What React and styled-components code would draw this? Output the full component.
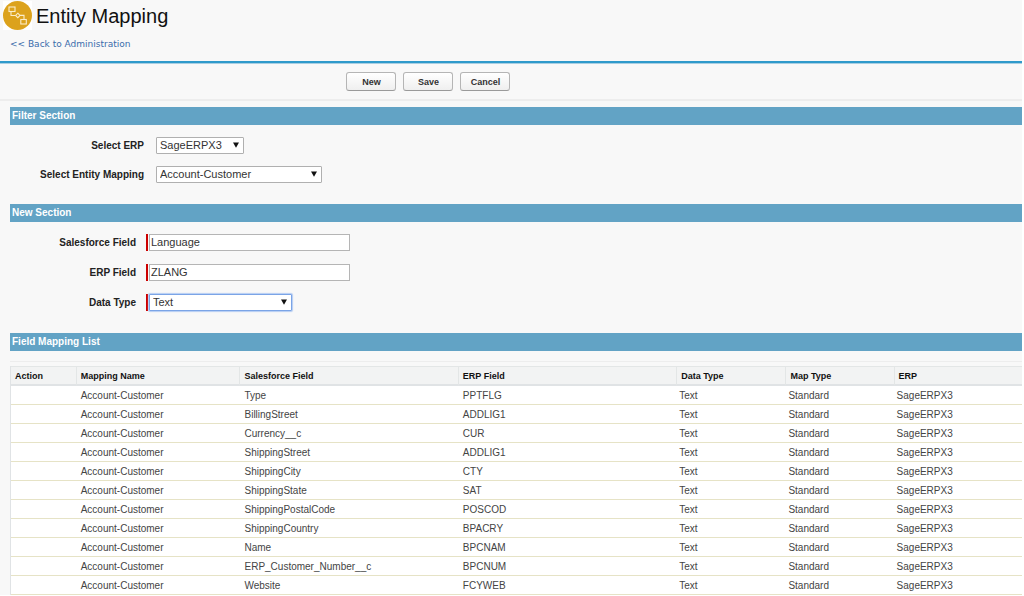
import React, { useState } from 'react'
import styled, { createGlobalStyle } from 'styled-components'

const columns = [
  { title: 'Action', width: '6.4%' },
  { title: 'Mapping Name', width: '16.2%' },
  { title: 'Salesforce Field', width: '21.6%' },
  { title: 'ERP Field', width: '21.6%' },
  { title: 'Data Type', width: '10.8%' },
  { title: 'Map Type', width: '10.7%' },
  { title: 'ERP', width: '12.7%' },
];

const mappings = [
  ['Type', 'PPTFLG'],
  ['BillingStreet', 'ADDLIG1'],
  ['Currency__c', 'CUR'],
  ['ShippingStreet', 'ADDLIG1'],
  ['ShippingCity', 'CTY'],
  ['ShippingState', 'SAT'],
  ['ShippingPostalCode', 'POSCOD'],
  ['ShippingCountry', 'BPACRY'],
  ['Name', 'BPCNAM'],
  ['ERP_Customer_Number__c', 'BPCNUM'],
  ['Website', 'FCYWEB'],
];

const LogoIcon = () => (
  <Logo viewBox="0 0 29 29" aria-hidden="true">
    <circle cx="14.5" cy="14.5" r="14.5" fill="#dca21c" />
    <g fill="none" stroke="#fbedca" strokeWidth="1.1">
      <rect x="6" y="6" width="6" height="4.5" />
      <path d="M8 10.5v4h4.5" />
      <path d="M14.8 12.2l2.2 2.2-2.2 2.2-2.2-2.2z" />
      <path d="M17 14.4h4v4.1" />
      <rect x="17.8" y="18.5" width="5.5" height="4.5" />
    </g>
  </Logo>
);

const SelectBox = ({ id, width, focused, options }) => (
  <SelectWrap $width={width}>
    <Select id={id} $focused={focused}>
      {options.map((option) => (
        <option key={option}>{option}</option>
      ))}
    </Select>
    <Arrow viewBox="0 0 6 6" aria-hidden="true">
      <path d="M0 0.5h6L3 5.8z" fill="#111" />
    </Arrow>
  </SelectWrap>
);

const App = () => {
  const [salesforceField, setSalesforceField] = useState('Language');
  const [erpField, setErpField] = useState('ZLANG');

  return (
    <Page>
      <GlobalStyle />
      <Header>
        <TitleRow>
          <LogoIcon />
          <Title>Entity Mapping</Title>
        </TitleRow>
        <BackLink href="#administration">&lt;&lt; Back to Administration</BackLink>
      </Header>

      <Toolbar>
        <Button type="button">New</Button>
        <Button type="button">Save</Button>
        <Button type="button">Cancel</Button>
      </Toolbar>

      <Content>
        <SectionTitle>Filter Section</SectionTitle>
        <Form $labelWidth="134px" $gap="12px" $bottom="21px">
          <Label htmlFor="erp">Select ERP</Label>
          <SelectBox id="erp" width="88px" options={['SageERPX3']} />
          <Label htmlFor="entity">Select Entity Mapping</Label>
          <SelectBox id="entity" width="166px" options={['Account-Customer']} />
        </Form>

        <SectionTitle>New Section</SectionTitle>
        <Form $labelWidth="126px" $gap="10px" $rowGap="13px" $bottom="22px">
          <Label htmlFor="sfField">Salesforce Field</Label>
          <Required>
            <Input
              id="sfField"
              value={salesforceField}
              onChange={(e) => setSalesforceField(e.target.value)}
            />
          </Required>
          <Label htmlFor="erpField">ERP Field</Label>
          <Required>
            <Input
              id="erpField"
              value={erpField}
              onChange={(e) => setErpField(e.target.value)}
            />
          </Required>
          <Label htmlFor="dataType">Data Type</Label>
          <Required>
            <SelectBox id="dataType" width="143px" focused options={['Text']} />
          </Required>
        </Form>

        <SectionTitle>Field Mapping List</SectionTitle>
        <List>
          <Table>
            <colgroup>
              {columns.map((col) => (
                <Col key={col.title} $width={col.width} />
              ))}
            </colgroup>
            <thead>
              <tr>
                {columns.map((col) => (
                  <Th key={col.title} scope="col">{col.title}</Th>
                ))}
              </tr>
            </thead>
            <tbody>
              {mappings.map(([field, erp]) => (
                <tr key={field}>
                  <Td />
                  <Td>Account-Customer</Td>
                  <Td>{field}</Td>
                  <Td>{erp}</Td>
                  <Td $tight>Text</Td>
                  <Td $tight>Standard</Td>
                  <Td $tight>SageERPX3</Td>
                </tr>
              ))}
            </tbody>
          </Table>
        </List>
      </Content>
    </Page>
  );
}

export default App


const GlobalStyle = createGlobalStyle`
  * {
    box-sizing: border-box;
  }
  body {
    margin: 0;
    background-color: #fff;
    color: #222;
    font-family: "Liberation Sans", Arial, sans-serif;
    font-size: 10px;
  }
`;

const Page = styled.div`
  margin-right: 2px;
  background-color: #f8f8f8;
`;

const Header = styled.header`
  height: 63px;
  border-bottom: 2px solid #2f9acb;
`;

const TitleRow = styled.div`
  display: flex;
  align-items: center;
  gap: 4px;
  height: 31px;
  padding-left: 3px;
`;

const Logo = styled.svg`
  width: 29px;
  height: 29px;
  background-color: #fff;
`;

const Title = styled.h1`
  margin: 0;
  font-size: 20px;
  font-weight: 400;
  line-height: 30px;
  color: #111;
`;

const BackLink = styled.a`
  display: inline-block;
  margin-left: 10px;
  font-family: Verdana, "DejaVu Sans", sans-serif;
  font-size: 9px;
  line-height: 26px;
  color: #3a6cab;
  text-decoration: none;
  &:hover {
    text-decoration: underline;
  }
`;

const Toolbar = styled.div`
  display: flex;
  align-items: center;
  gap: 7px;
  height: 38px;
  padding-left: 33.9%;
  border-top: 1px solid #a9cfe2;
  border-bottom: 2px solid #ededed;
`;

const Button = styled.button`
  width: 50px;
  height: 19px;
  padding: 0;
  border: 1px solid #b5b5b5;
  border-bottom-color: #9a9a9a;
  border-radius: 3px;
  background: linear-gradient(#fff, #efefef);
  color: #333;
  font-family: inherit;
  font-size: 9px;
  font-weight: 700;
  cursor: pointer;
`;

const Content = styled.main`
  padding: 6px 0 0 10px;
`;

const SectionTitle = styled.h2`
  margin: 0;
  padding-left: 2px;
  background-color: #62a3c5;
  color: #fff;
  font-size: 10px;
  font-weight: 700;
  line-height: 18px;
`;

const Form = styled.div`
  display: grid;
  grid-template-columns: ${(props) => props.$labelWidth} 1fr;
  column-gap: ${(props) => props.$gap};
  row-gap: ${(props) => props.$rowGap || '12px'};
  padding: 12px 0 ${(props) => props.$bottom};
`;

const Label = styled.label`
  color: #222;
  font-weight: 700;
  line-height: 17px;
  text-align: right;
  white-space: nowrap;
`;

const Required = styled.div`
  display: flex;
  border-left: 2px solid #c00;
  padding-left: 1px;
`;

const Input = styled.input`
  width: 201px;
  height: 17px;
  padding: 0 1px 1px;
  border: 1px solid #b5b5b5;
  background-color: #fff;
  color: #333;
  font-family: inherit;
  font-size: 11px;
`;

const SelectWrap = styled.div`
  position: relative;
  width: ${(props) => props.$width};
  height: 17px;
`;

const Select = styled.select`
  display: block;
  width: 100%;
  height: 17px;
  padding: 0 14px 1px 3px;
  appearance: none;
  border: 1px solid ${(props) => (props.$focused ? '#7ba4e6' : '#b0b0b0')};
  border-radius: 1px;
  box-shadow: ${(props) => (props.$focused ? '0 0 1px 1px #b4cdf3' : 'none')};
  background-color: #fff;
  color: #333;
  font-family: inherit;
  font-size: 11px;
`;

const Arrow = styled.svg`
  position: absolute;
  top: 5px;
  right: 5px;
  width: 6px;
  height: 6px;
  pointer-events: none;
`;

const List = styled.div`
  margin-top: 10px;
  padding-top: 4px;
  border-top: 1px solid #ededed;
`;

const Table = styled.table`
  width: 100%;
  table-layout: fixed;
  border-spacing: 0;
  border-left: 1px solid #e0e3e5;
  background-color: #fff;
`;

const Col = styled.col`
  width: ${(props) => props.$width};
`;

const Th = styled.th`
  height: 20px;
  padding: 0 0 0 4px;
  border-top: 1px solid #e3e6e6;
  border-bottom: 2px solid #e0e3e5;
  background-color: #f2f3f3;
  color: #111;
  font-size: 9px;
  font-weight: 700;
  text-align: left;
  & + & {
    border-left: 1px solid #e3e6e6;
  }
`;

const Td = styled.td`
  height: 19px;
  padding: 0 0 0 ${(props) => (props.$tight ? '3px' : '5px')};
  border-bottom: 1px solid #e6e3c6;
  color: #444;
  font-size: 10px;
`;
